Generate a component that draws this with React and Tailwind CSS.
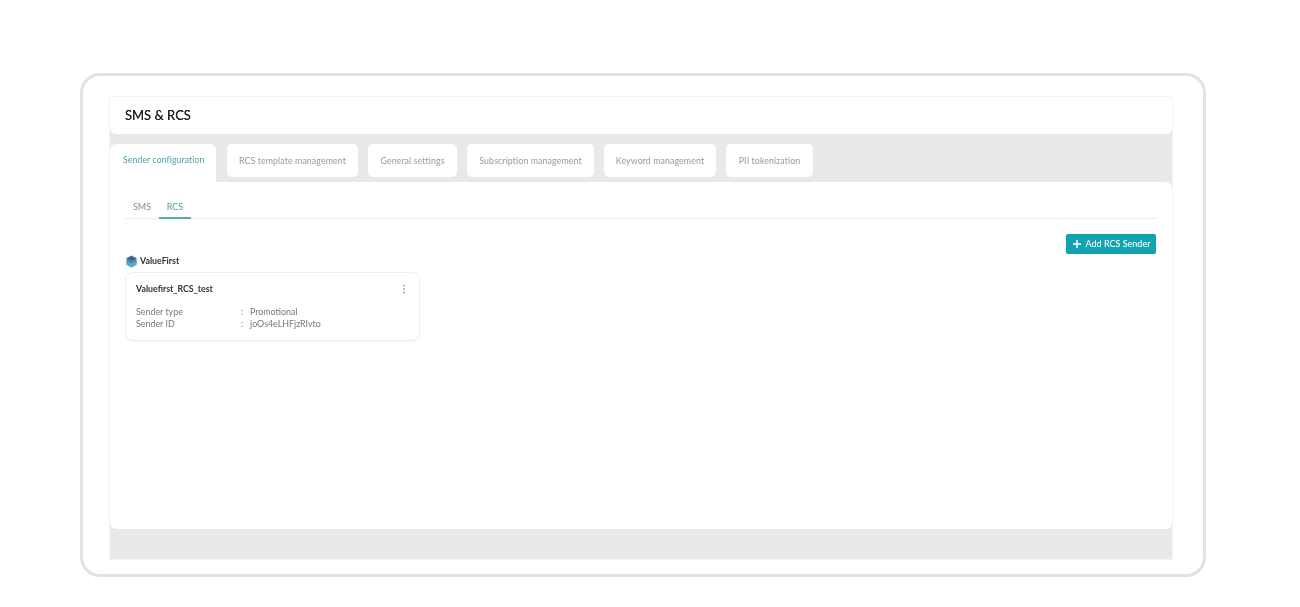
export default function App() {
  const tabs = [
    ["RCS template management", "w-[131px]"],
    ["General settings", "w-[89px]"],
    ["Subscription management", "w-[127px]"],
    ["Keyword management", "w-[112px]"],
    ["PII tokenization", "w-[87px]"],
  ];
  return (
    <div className="w-[1300px] h-[607px] bg-white pt-[73px] pl-[80px] overflow-hidden font-['Lato',sans-serif]">
      <div className="w-[1126px] h-[504px] border-[3px] border-[#e2e2e2] rounded-[20px] pt-[20px] pl-[26px]">
        <div className="w-[1064px] h-[464px] bg-[#e9e9e9] border border-[#f4f4f4] flex flex-col blur-[0.5px]">
          <div className="h-[37px] shrink-0 bg-white rounded-b-[6px] pl-[15px] flex items-center text-[13px] text-[#222] pt-[1px] [text-shadow:0_0_0.6px_#222]">
            SMS &amp; RCS
          </div>
          <div className="h-[48px] shrink-0 flex items-end gap-[11px]">
            <div className="w-[106px] h-[38px] bg-white rounded-t-[6px] pl-[13px] pt-[9px] text-[8.7px] text-[#4aa3a8] tracking-[0.1px]">
              Sender configuration
            </div>
            <div className="flex gap-[10px] h-[38px]">
              {tabs.map(([t, w]) => (
                <div key={t} className={`${w} h-[33px] bg-white rounded-[5px] flex items-center justify-center text-[8.8px] text-[#999] tracking-[0.1px]`}>
                  {t}
                </div>
              ))}
            </div>
          </div>
          <div className="h-[347px] shrink-0 bg-white rounded-b-[6px] rounded-tr-[6px] px-[15px] pt-[15px]">
            <div className="flex h-[22px] border-b border-[#ececec] text-[9px]">
              <div className="w-[34px] text-center text-[#8a8a8a] pt-[3px]">SMS</div>
              <div className="w-[32px] text-center text-[#4d9a9e] pt-[3px] border-b-[2px] border-[#5aa9ab] h-[22px]">RCS</div>
            </div>
            <div className="flex justify-end pt-[15px] pr-[1px] h-[35px]">
              <div className="w-[90px] h-[20px] bg-[#12a3b0] rounded-[2px] flex items-center justify-center gap-[4px] text-white text-[9px] font-medium">
                <svg width="10" height="10" viewBox="0 0 10 10" fill="none" stroke="white" strokeWidth="1.5"><path d="M5 1v8M1 5h8" /></svg>
                Add RCS Sender
              </div>
            </div>
            <div className="flex items-center gap-[3px] h-[14px] pl-[1px] text-[8.8px] font-bold text-[#333]">
              <svg width="11" height="13" viewBox="0 0 11 13">
                <path d="M5.5 0.5 10.5 3 10.5 9.5 5.5 12.5 0.5 9.5 0.5 3Z" fill="#5a7fa8" />
                <path d="M0.5 6 5.5 8.6 10.5 6 10.5 9.5 5.5 12.5 0.5 9.5Z" fill="#4fb0c0" />
                <path d="M1.5 3.4 5.5 1.5 9.5 3.4 5.5 5.6Z" fill="#3d5f8e" />
              </svg>
              ValueFirst
            </div>
            <div className="w-[295px] h-[69px] mt-[4px] bg-white border border-[#efefef] rounded-[8px] shadow-[0_1px_2px_rgba(0,0,0,0.03)] pl-[10px] pr-[11px] pt-[10px]">
              <div className="flex justify-between items-center h-[12px] text-[8.8px] font-bold text-[#333]">
                Valuefirst_RCS_test
                <svg width="4" height="10" viewBox="0 0 4 10" className="mr-[2px]" fill="#999">
                  <circle cx="2" cy="1.5" r="0.9" /><circle cx="2" cy="5" r="0.9" /><circle cx="2" cy="8.5" r="0.9" />
                </svg>
              </div>
              <div className="mt-[10.5px] text-[8.9px] leading-[12.5px] text-[#777] grid grid-cols-[104px_10px_1fr]">
                <span>Sender type</span><span className="pl-px">:</span><span>Promotional</span>
                <span>Sender ID</span><span className="pl-px">:</span><span>joOs4eLHFjzRIvto</span>
              </div>
            </div>
          </div>
        </div>
      </div>
    </div>
  );
}
